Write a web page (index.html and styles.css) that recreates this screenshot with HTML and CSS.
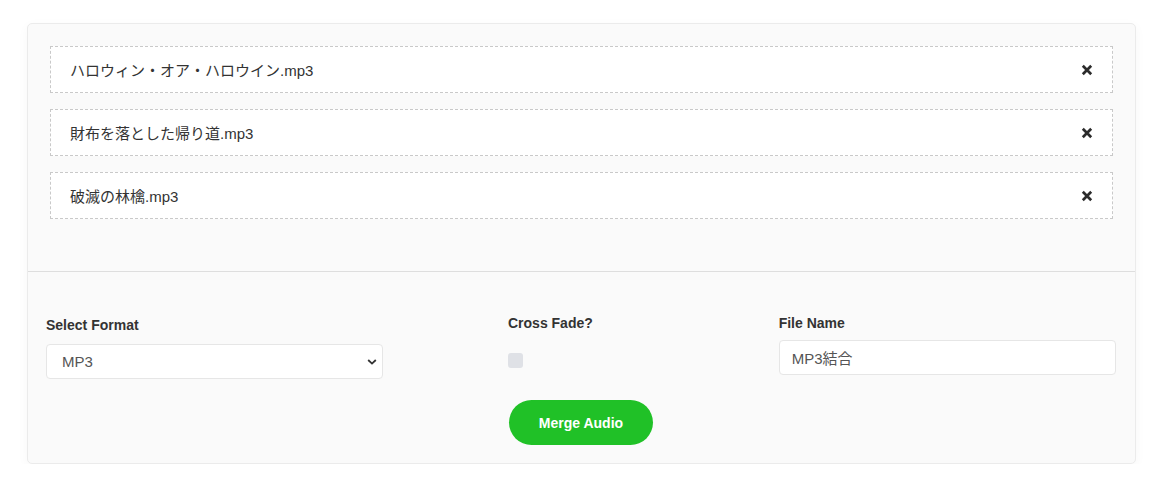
FILE: index.html
```html
<!DOCTYPE html>
<html lang="ja">
<head>
<meta charset="UTF-8">
<meta name="viewport" content="width=device-width, initial-scale=1.0">
<title>Audio Merger</title>
<link rel="stylesheet" href="styles.css">
</head>
<body>

<div class="panel">
  <div class="file-list">
    <div class="file-item">
      <span class="file-name">ハロウィン・オア・ハロウイン.mp3</span>
      <button class="remove" title="Remove">
        <svg width="12" height="12" viewBox="0 0 12 12"><path d="M1.8 1.8 L10.2 10.2 M10.2 1.8 L1.8 10.2"/></svg>
      </button>
    </div>
    <div class="file-item">
      <span class="file-name">財布を落とした帰り道.mp3</span>
      <button class="remove" title="Remove">
        <svg width="12" height="12" viewBox="0 0 12 12"><path d="M1.8 1.8 L10.2 10.2 M10.2 1.8 L1.8 10.2"/></svg>
      </button>
    </div>
    <div class="file-item">
      <span class="file-name">破滅の林檎.mp3</span>
      <button class="remove" title="Remove">
        <svg width="12" height="12" viewBox="0 0 12 12"><path d="M1.8 1.8 L10.2 10.2 M10.2 1.8 L1.8 10.2"/></svg>
      </button>
    </div>
  </div>

  <div class="options">
    <div class="col col-format">
      <label class="field-label" for="format">Select Format</label>
      <div class="select-wrap">
        <select id="format" class="field">
          <option>MP3</option>
          <option>WAV</option>
          <option>OGG</option>
        </select>
        <svg class="chevron" width="10" height="6" viewBox="0 0 10 6"><path d="M1.2 1 L5 4.6 L8.8 1"/></svg>
      </div>
    </div>

    <div class="col col-middle">
      <div class="middle-inner">
        <label class="field-label" for="crossfade">Cross Fade?</label>
        <input type="checkbox" id="crossfade" class="check">
        <button class="merge">Merge Audio</button>
      </div>
    </div>

    <div class="col col-name">
      <label class="field-label" for="filename">File Name</label>
      <input type="text" id="filename" class="field" value="MP3結合">
    </div>
  </div>
</div>

</body>
</html>
```

FILE: styles.css
```css
* {margin: 0; padding: 0; box-sizing: border-box;}
body {
  background: #fff;
  color: #333;
  font-family: "Liberation Sans", "Noto Sans CJK JP", sans-serif;
}

.panel {
  margin: 23px 26px 0 27px;
  background: #fafafa;
  border: 1px solid #ebebeb;
  border-radius: 5px;
  box-shadow: 0 3px 12px rgba(0, 0, 0, 0.035);
}

.file-list {
  display: flex; flex-direction: column; gap: 16px;
  padding: 22px 22px 52px 22px;
  border-bottom: 1px solid #dedede;
}
.file-item {
  display: flex; align-items: center; justify-content: space-between;
  height: 47px; padding: 0 19px;
  background: #fff;
  border: 1px dashed #c9c9c9;
}
.file-name {font-size: 15px; color: #333;}
.remove {background: none; border: none; cursor: pointer; display: flex; padding: 0;}
.remove svg path {stroke: #2b2b2b; stroke-width: 2.7; fill: none;}

.options {
  display: grid; grid-template-columns: 1fr 1fr 1fr; column-gap: 29px;
  align-items: start;
  padding: 41px 19px 18px 18px;
}
.field-label {display: block; font-size: 14px; font-weight: bold; line-height: 20px; color: #333;}
.col-format {padding-top: 2px;}
.col-format .field-label {margin-bottom: 9px;}
.col-name .field-label {margin-bottom: 7px;}

.field {
  display: block; width: 100%; height: 35px;
  background: #fff;
  border: 1px solid #e6e6e6; border-radius: 4px;
  font-family: inherit; font-size: 15px; color: #555;
  outline: none;
}
input.field {padding: 0 12px;}
.select-wrap {position: relative;}
select.field {appearance: none; -webkit-appearance: none; padding: 0 15px;}
.chevron {position: absolute; right: 6px; top: 15px; pointer-events: none;}
.chevron path {stroke: #333; stroke-width: 1.8; fill: none;}

.col-middle {display: flex; justify-content: center;}
.middle-inner {width: 146px;}
.check {
  appearance: none; -webkit-appearance: none;
  display: block; width: 15px; height: 15px; margin-top: 20px;
  background: #dfe1e6; border-radius: 3px; cursor: pointer;
}
.check:checked {background: #20c127;}
.merge {
  display: block; width: 144px; height: 45px; margin: 32px 0 0 1px;
  background: #20c127; color: #fff;
  border: none; border-radius: 23px;
  font-family: inherit; font-size: 14px; font-weight: bold;
  cursor: pointer;
}
.merge:hover {background: #1aa920;}
```
